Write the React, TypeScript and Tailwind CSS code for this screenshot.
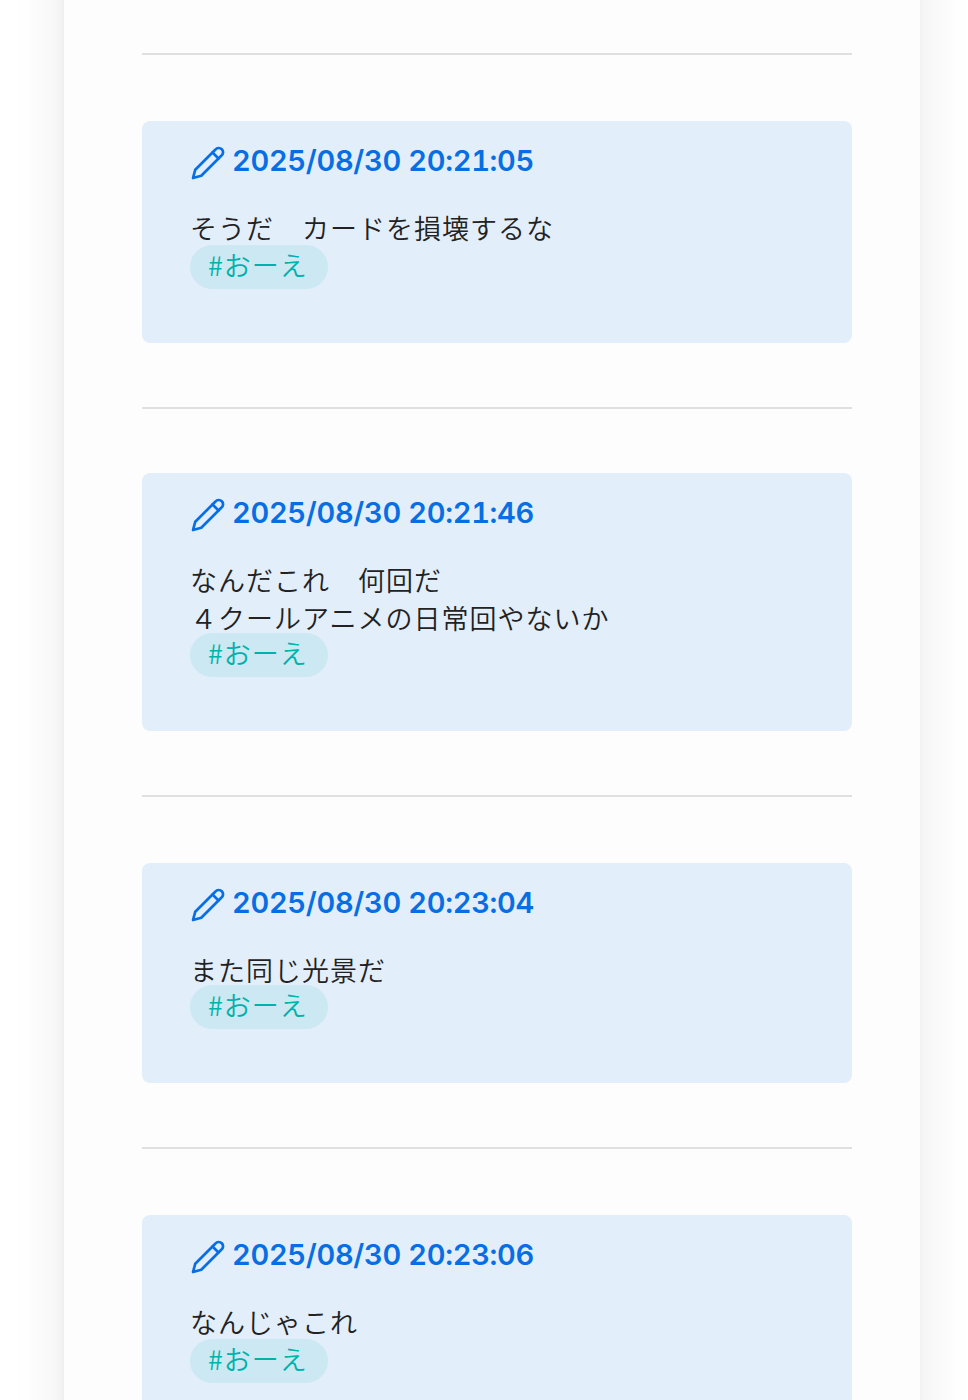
import clsx from 'clsx';

type Post = {
  date: string;
  lines: string[];
  tag: string;
  cardClass: string;
  tagClass: string;
};

const posts: Post[] = [
  {
    date: '2025/08/30 20:21:05',
    lines: ['そうだ　カードを損壊するな'],
    tag: '#おーえ',
    cardClass: 'mt-[66px] h-[222px]',
    tagClass: '-mt-[2px]',
  },
  {
    date: '2025/08/30 20:21:46',
    lines: ['なんだこれ　何回だ', '４クールアニメの日常回やないか'],
    tag: '#おーえ',
    cardClass: 'mt-[64px] h-[258px]',
    tagClass: '-mt-[4px]',
  },
  {
    date: '2025/08/30 20:23:04',
    lines: ['また同じ光景だ'],
    tag: '#おーえ',
    cardClass: 'mt-[66px] h-[220px]',
    tagClass: '-mt-[4px]',
  },
  {
    date: '2025/08/30 20:23:06',
    lines: ['なんじゃこれ'],
    tag: '#おーえ',
    cardClass: 'mt-[66px] h-[222px]',
    tagClass: '-mt-[2px]',
  },
];

const PencilIcon = () => (
  <svg
    className="mt-[2px] h-9 w-9 shrink-0"
    viewBox="0 0 24 24"
    fill="none"
    stroke="currentColor"
    strokeWidth="1.8"
    strokeLinecap="round"
    strokeLinejoin="round"
  >
    <path d="M17 3a2.85 2.83 0 1 1 4 4L7.5 20.5 2 22l1.5-5.5Z" />
    <path d="m15 5 4 4" />
  </svg>
);

const PostCard = ({ post }: { post: Post }) => {
  return (
    <article className={clsx('overflow-hidden rounded-lg bg-[#e2eefa] px-12 pt-[21px]', post.cardClass)}>
      <a href="#" className="flex h-10 items-center text-[#076ee4]">
        <PencilIcon />
        <time className="ml-[6px] whitespace-nowrap pb-[3px] font-['Inter','Liberation_Sans',sans-serif] text-[29px] font-semibold tabular-nums leading-[38px] tracking-[-0.32px]">
          {post.date}
        </time>
      </a>
      <div className="pt-[27px] text-[27px] font-[350] leading-[38px] tracking-[1px] text-[#222]">
        {post.lines.map((line) => (
          <p key={line} className="whitespace-nowrap">{line}</p>
        ))}
      </div>
      <a
        href="#"
        className={clsx(
          'flex h-11 w-[138px] items-center rounded-full bg-[#cbe8f3] pb-[3px] pl-[18px] text-[27px] font-[350] tracking-[1px] text-[#00b2ab]',
          post.tagClass
        )}
      >
        {post.tag}
      </a>
    </article>
  );
};

const App = () => {
  return (
    <div className="flex h-[1400px] items-center overflow-hidden bg-white font-['Noto_Sans_CJK_JP',sans-serif]">
      {/* taller than the viewport so the side shadow stays even at both ends */}
      <main className="ml-16 h-[1520px] w-[856px] shrink-0 bg-[#fdfdfd] pl-[78px] pr-[68px] pt-[113px] shadow-[0_0_52px_rgba(0,0,0,0.09),-2px_0_8px_rgba(0,0,0,0.03)]">
        {posts.map((post, index) => (
          <section key={post.date}>
            <hr className={clsx('border-t-2 border-[#e0e0e0]', index > 0 && 'mt-16')} />
            <PostCard post={post} />
          </section>
        ))}
      </main>
    </div>
  );
};

export default App;
